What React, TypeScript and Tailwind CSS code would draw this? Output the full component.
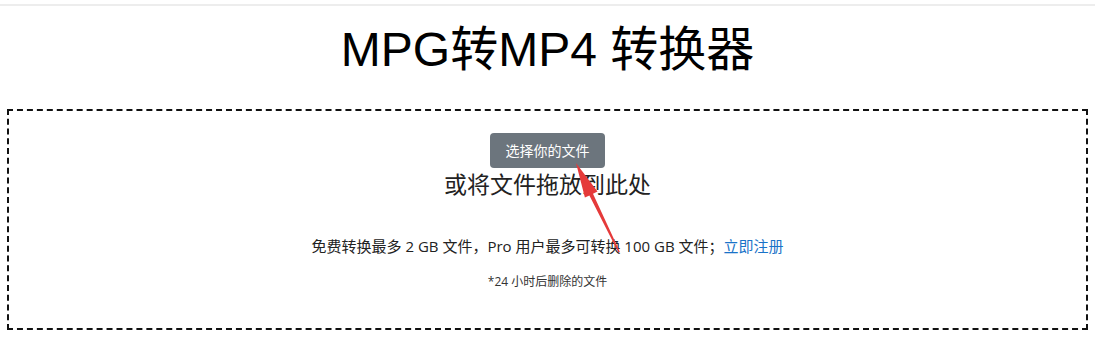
import React from "react";

export default function App() {
  const font = { fontFamily: '"Liberation Sans", "Noto Sans CJK SC", sans-serif' };
  const body = { fontFamily: '"Open Sans", "Noto Sans CJK SC", sans-serif' };
  return (
    <div className="relative w-[1095px] h-[337px] bg-white text-[#212529] overflow-hidden" style={font}>
      <div className="pt-[4px]">
        <div className="border-t-2 border-[#ededed]" />
      </div>
      <h1 className="mt-[20px] text-center text-[48px] leading-[48px] font-normal text-black">
        MPG转MP4 转换器
      </h1>
      <div className="mt-[35px] mx-[7px] h-[221px] border-2 border-dashed border-[#111] flex flex-col items-center pt-[22px]">
        <button className="w-[115px] h-[35px] rounded-[4px] bg-[#6c757d] text-white text-[14px] leading-none">
          选择你的文件
        </button>
        <div className="text-[23px] leading-[34px] text-[#222]">或将文件拖放到此处</div>
        <div className="mt-[34px] text-[15px] leading-[20px] text-[#222]" style={body}>
          免费转换最多 2 GB 文件，Pro 用户最多可转换 100 GB 文件；<span className="text-[#1a73c8]">立即注册</span>
        </div>
        <div className="mt-[18px] text-[12px] leading-[16px] text-[#333]" style={body}>*24 小时后删除的文件</div>
      </div>
      <svg className="absolute left-0 top-0 pointer-events-none" width="1095" height="337" viewBox="0 0 1095 337">
        <polygon
          points="576,163 597.5,191.5 593,193.8 619.8,251.8 618.4,252.4 589.4,195.5 584.9,197.6"
          fill="#e53a3a"
        />
      </svg>
    </div>
  );
}
